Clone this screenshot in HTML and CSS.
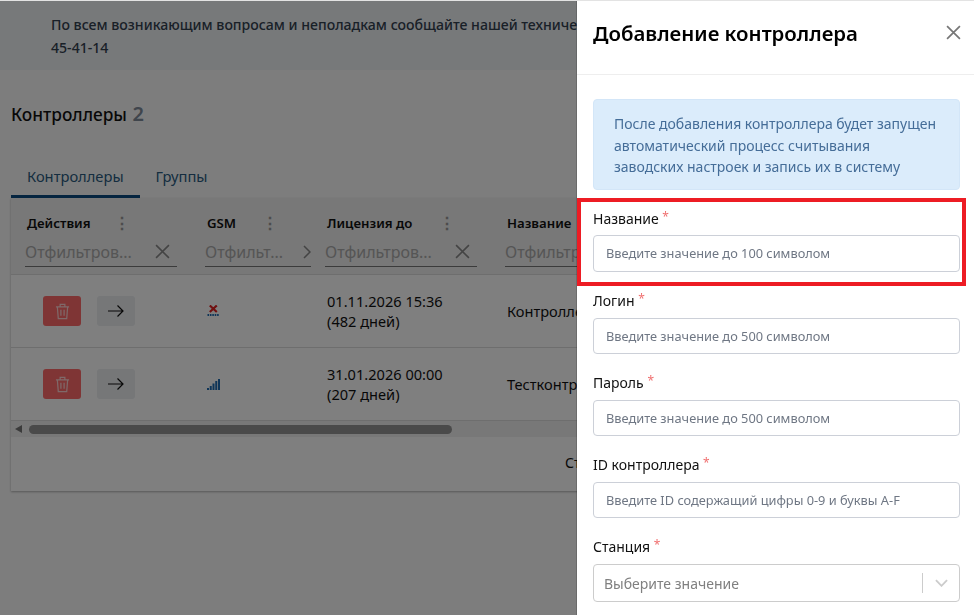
FILE: index.html
```html
<!DOCTYPE html>
<html lang="ru">
<head>
  <meta charset="UTF-8" />
  <meta name="viewport" content="width=device-width, initial-scale=1.0"/>
  <title>Контроллеры</title>
  <link rel="stylesheet" href="styles.css">
</head>
<body>
  <div class="page">
    <div class="notice">По всем возникающим вопросам и неполадкам сообщайте нашей техническо<br>45-41-14</div>

    <div class="content">
      <h1 class="title">Контроллеры <span class="count">2</span></h1>

      <div class="tabs">
        <div class="tab active">Контроллеры</div>
        <div class="tab">Группы</div>
      </div>

      <div class="card">
        <div class="row head">
          <div class="cell">
            <div class="col-name"><span class="name-actions">Действия</span><span class="dots">⋮</span></div>
            <div class="filter"><span>Отфильтров...</span>
              <svg class="filter-x" viewBox="0 0 14 14"><path d="M1 1l12 12M13 1L1 13"/></svg>
            </div>
          </div>
          <div class="cell cell-gsm">
            <div class="col-name"><span class="name-gsm">GSM</span><span class="dots">⋮</span></div>
            <div class="filter"><span>Отфильт...</span>
              <svg class="filter-more" viewBox="0 0 8 14"><path d="M1 1l6 6-6 6"/></svg>
            </div>
          </div>
          <div class="cell">
            <div class="col-name"><span class="name-lic">Лицензия до</span><span class="dots">⋮</span></div>
            <div class="filter"><span>Отфильтров...</span>
              <svg class="filter-x" viewBox="0 0 14 14"><path d="M1 1l12 12M13 1L1 13"/></svg>
            </div>
          </div>
          <div class="cell">
            <div class="col-name"><span>Название</span></div>
            <div class="filter"><span>Отфильтр</span></div>
          </div>
        </div>

        <div class="row">
          <div class="cell actions">
            <button class="btn btn-del">
              <svg viewBox="0 0 16 18"><path d="M1 4h14M5.5 4V1.5h5V4M2.5 4l1 12.5h9l1-12.5M6.3 7v6.5M9.7 7v6.5"/></svg>
            </button>
            <button class="btn btn-go">
              <svg viewBox="0 0 16 12"><path d="M0 6h15M9.5 .5L15 6l-5.5 5.5"/></svg>
            </button>
          </div>
          <div class="cell">
            <svg class="signal" viewBox="0 0 13 12">
              <path class="cross" d="M2.8 .5l7 6.5M9.8 .5l-7 6.5"/>
              <path class="dotline" d="M.5 10h12"/>
            </svg>
          </div>
          <div class="cell date">01.11.2026 15:36<br>(482 дней)</div>
          <div class="cell text">Контролле</div>
        </div>

        <div class="row">
          <div class="cell actions">
            <button class="btn btn-del">
              <svg viewBox="0 0 16 18"><path d="M1 4h14M5.5 4V1.5h5V4M2.5 4l1 12.5h9l1-12.5M6.3 7v6.5M9.7 7v6.5"/></svg>
            </button>
            <button class="btn btn-go">
              <svg viewBox="0 0 16 12"><path d="M0 6h15M9.5 .5L15 6l-5.5 5.5"/></svg>
            </button>
          </div>
          <div class="cell">
            <svg class="signal" viewBox="0 0 13 12">
              <rect x="0" y="10" width="2" height="2"/>
              <rect x="2.75" y="8" width="2" height="4"/>
              <rect x="5.5" y="5.5" width="2" height="6.5"/>
              <rect x="8.25" y="3" width="2" height="9"/>
              <rect x="11" y="1" width="2" height="11"/>
            </svg>
          </div>
          <div class="cell date">31.01.2026 00:00<br>(207 дней)</div>
          <div class="cell text">Тестконтро</div>
        </div>

        <div class="scrollbar">
          <span class="scroll-arrow"></span>
          <div class="scroll-thumb"></div>
        </div>

        <div class="pager">Ст</div>
      </div>
    </div>
  </div>

  <div class="overlay"></div>

  <aside class="drawer">
    <div class="drawer-head">
      <h2>Добавление контроллера</h2>
      <svg class="close" viewBox="0 0 14 14"><path d="M1 1l12 12M13 1L1 13"/></svg>
    </div>
    <div class="drawer-body">
      <div class="info">После добавления контроллера будет запущен автоматический процесс считывания заводских настроек и запись их в систему</div>

      <div class="field">
        <label>Название <i>*</i></label>
        <div class="input">Введите значение до 100 символом</div>
      </div>
      <div class="field">
        <label>Логин <i>*</i></label>
        <div class="input">Введите значение до 500 символом</div>
      </div>
      <div class="field">
        <label>Пароль <i>*</i></label>
        <div class="input">Введите значение до 500 символом</div>
      </div>
      <div class="field">
        <label>ID контроллера <i>*</i></label>
        <div class="input">Введите ID содержащий цифры 0-9 и буквы A-F</div>
      </div>
      <div class="field">
        <label>Станция <i>*</i></label>
        <div class="select">
          <span>Выберите значение</span>
          <div class="select-arrow">
            <svg viewBox="0 0 14 8"><path d="M1 1l6 6 6-6"/></svg>
          </div>
        </div>
      </div>
    </div>
  </aside>

  <div class="highlight"></div>
  <div class="top-line"></div>
</body>
</html>
```

FILE: styles.css
```css
* {
  box-sizing: border-box;
}

html, body {
  height: 100%;
}

body {
  margin: 0;
  overflow: hidden;
  font-family: "Noto Sans", Arial, sans-serif;
  font-size: 14px;
  color: #111;
  background: #fafafa;
}

.page {
  width: 577px;
  height: 615px;
  overflow: hidden;
}

.notice {
  width: 974px;
  height: 70px;
  padding: 13px 51px 0;
  line-height: 23px;
  font-size: 14.1px;
  white-space: nowrap;
  font-weight: 500;
  color: #33404f;
  background: #eef2f5;
}

.content {
  width: 974px;
  padding: 0 11px;
}

.title {
  margin: 32px 0 0;
  font-size: 17.3px;
  line-height: 24px;
  font-weight: 500;
}

.count {
  color: #7f8a99;
  font-size: 20px;
  font-weight: 600;
  margin-left: 1px;
}

/* Tabs */
.tabs {
  display: flex;
  margin-top: 37px;
}

.tab {
  padding: 0 16px;
  height: 34px;
  line-height: 24px;
  font-size: 14.7px;
  color: #2a5a80;
}

.tab.active {
  border-bottom: 3px solid #0a4a80;
}

/* Table */
.card {
  background: #fff;
  box-shadow: 0 1px 2px rgba(0, 0, 0, .3);
  height: 293px;
}

.row {
  display: grid;
  grid-template-columns: 180px 120px 180px 1fr;
  height: 73px;
  align-items: center;
  border-bottom: 1px solid #ddd;
  font-size: 14.6px;
}

.cell {
  padding-left: 16px;
  white-space: nowrap;
}

.row.head {
  height: 77px;
  background: #f0f0f0;
  align-items: start;
}

.row.head .cell {
  padding: 16px 14px 0;
}

.row.head .cell-gsm {
  padding-right: 0;
}

.col-name {
  display: flex;
  align-items: center;
  height: 18px;
  padding-left: 2px;
  font-size: 13.2px;
  font-weight: 600;
}

.name-actions { width: 87px; }
.name-gsm { width: 55px; }
.name-lic { width: 112px; }

.dots {
  color: #999;
  font-size: 16px;
}

.filter {
  display: flex;
  align-items: center;
  justify-content: space-between;
  height: 30px;
  margin-top: 5px;
  border-bottom: 1px solid #777;
  color: #aaa;
  font-size: 16px;
  white-space: nowrap;
  overflow: hidden;
}

.filter-x, .filter-more {
  fill: none;
  stroke: #888;
  stroke-width: 1.5;
  flex: none;
}

.filter-x {
  width: 15px;
  height: 15px;
  margin-right: 7px;
}

.filter-more {
  width: 8px;
  height: 14px;
}

.actions {
  display: flex;
  gap: 16px;
  padding-left: 32px;
}

.btn {
  width: 38px;
  height: 30px;
  padding: 0;
  border: none;
  border-radius: 3px;
  display: flex;
  align-items: center;
  justify-content: center;
}

.btn svg {
  fill: none;
}

.btn-del {
  background: #ff6b6b;
}

.btn-del svg {
  width: 15px;
  height: 17px;
  stroke: #fff;
  stroke-width: 1.3;
  opacity: .7;
}

.btn-go {
  background: #eceef1;
}

.btn-go svg {
  width: 16px;
  height: 12px;
  stroke: #111;
  stroke-width: 1.2;
}

.signal {
  display: block;
  width: 13px;
  height: 12px;
  fill: #1f6bb0;
}

.cross {
  fill: none;
  stroke: #e02020;
  stroke-width: 2.2;
}

.dotline {
  fill: none;
  stroke: #1f6bb0;
  stroke-width: 1.8;
  stroke-dasharray: 1.6 .8;
}

.date {
  line-height: 20px;
}

.scrollbar {
  display: flex;
  align-items: center;
  height: 16px;
  background: #f1f1f1;
}

.scroll-arrow {
  width: 0;
  height: 0;
  margin-left: 4px;
  border: 4px solid transparent;
  border-left: none;
  border-right: 7px solid #777;
}

.scroll-thumb {
  width: 423px;
  height: 9px;
  margin-left: 7px;
  border-radius: 5px;
  background: #949494;
}

.pager {
  padding: 16px 0 0 554px;
  line-height: 20px;
  white-space: nowrap;
}

/* Overlay and drawer */
.overlay {
  position: fixed;
  inset: 0;
  background: rgba(0, 0, 0, .5);
}

.drawer {
  position: fixed;
  top: 0;
  right: 0;
  bottom: 0;
  width: 397px;
  background: #fff;
  box-shadow: -1px 0 0 rgba(0, 0, 0, .15);
  overflow: hidden;
}

.drawer-head {
  display: flex;
  align-items: center;
  justify-content: space-between;
  height: 75px;
  padding: 0 13px 9px 16px;
  border-bottom: 1px solid #eee;
}

.drawer-head h2 {
  margin: 0;
  font-size: 20.4px;
  font-weight: 600;
  color: #000;
}

.close {
  width: 15px;
  height: 15px;
  fill: none;
  stroke: #777;
  stroke-width: 1.6;
}

.drawer-body {
  padding: 24px 14px 0 16px;
}

.info {
  height: 91px;
  padding: 13px 20px;
  line-height: 21.5px;
  color: #456d98;
  background: #dbecfb;
  border: 1px solid #d3e6f8;
  border-radius: 4px;
}

.field {
  margin-top: 17px;
}

label {
  display: block;
  height: 29px;
  line-height: 20px;
  color: #111;
}

label i {
  font-style: normal;
  font-size: 12px;
  vertical-align: 3px;
  color: #f07070;
}

.input {
  height: 36px;
  padding: 0 12px;
  line-height: 34px;
  font-size: 12.8px;
  color: #6f7784;
  border: 1px solid #ccd0d8;
  border-radius: 4px;
}

.info + .field label {
  height: 28px;
}

.info + .field .input {
  height: 37px;
  line-height: 35px;
}

.select {
  display: flex;
  align-items: center;
  justify-content: space-between;
  height: 38px;
  padding-left: 10px;
  color: #808080;
  border: 1px solid #ccc;
  border-radius: 4px;
}

.select-arrow {
  display: flex;
  align-items: center;
  justify-content: center;
  width: 37px;
  height: 20px;
  border-left: 1px solid #ccc;
}

.select-arrow svg {
  width: 13px;
  height: 8px;
  fill: none;
  stroke: #ccc;
  stroke-width: 2;
}

/* Annotation frame from the screenshot */
.highlight {
  position: fixed;
  left: 577px;
  top: 198px;
  width: 389px;
  height: 88px;
  border: 4px solid #ed1c24;
}

.top-line {
  position: fixed;
  top: 0;
  left: 0;
  right: 0;
  height: 1px;
  background: #e3e3e3;
}
```
